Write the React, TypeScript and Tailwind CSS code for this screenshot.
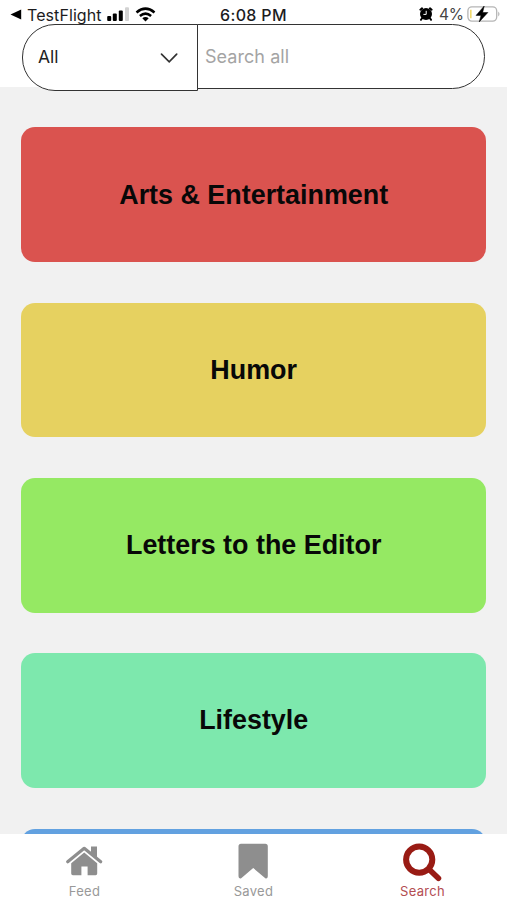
type Category = {
  name: string;
  color: string;
};

const categories: Category[] = [
  { name: 'Arts & Entertainment', color: 'bg-[#da534f]' },
  { name: 'Humor', color: 'bg-[#e6d160]' },
  { name: 'Letters to the Editor', color: 'bg-[#95e963]' },
  { name: 'Lifestyle', color: 'bg-[#7de8ad]' },
  { name: '', color: 'bg-[#62a1e0]' },
];

const StatusBar = () => (
  <div className="flex h-6 items-start text-[#1c1c1e]">
    <div className="flex w-[220px] items-start pt-[5px] pl-[10px]">
      <svg className="mt-[4px] h-[11px] w-[12px]" viewBox="0 0 12 11">
        <path d="M0.5 5.5 11.2 0.6V10.4Z" fill="#000" />
      </svg>
      <span className="ml-[5px] w-[75px] text-[16px] leading-5 tracking-[0.08px] whitespace-nowrap">TestFlight</span>
      <svg className="mt-[2px] ml-[5px] h-[14px] w-[23px]" viewBox="0 0 23 14">
        <rect x="0.2" y="9" width="4" height="5" rx="1" fill="#000" />
        <rect x="5.8" y="6.5" width="4" height="7.5" rx="1" fill="#000" />
        <rect x="11.8" y="3.5" width="4" height="10.5" rx="1" fill="#000" />
        <rect x="18" y="0.2" width="4" height="13.8" rx="1" fill="#d2d2d2" />
      </svg>
      <svg className="mt-[2px] ml-[5px] h-[15px] w-[21px]" viewBox="0 0 21 15" fill="none" stroke="#000" strokeWidth="2.6">
        <path d="M1.5 5.4Q10.5 -2 19.5 5.4" />
        <path d="M4.9 9Q10.5 4.4 16.1 9" />
        <path d="M7.3 11.3Q10.5 8.8 13.7 11.3L10.5 14.5Z" fill="#000" stroke="none" />
      </svg>
    </div>
    <span className="w-[100px] pt-[5px] text-[16px] leading-5 font-medium tracking-[0.35px] whitespace-nowrap">6:08 PM</span>
    <div className="flex flex-1 items-start pt-[5px] pl-[99px]">
      <svg className="mt-[2px] h-[14px] w-[14px]" viewBox="0 0 14 14">
        <path d="M3.2 11 2 12.8M10.8 11 12 12.8M1.4 2.7 3 1.4M12.6 2.7 11 1.4" stroke="#000" strokeWidth="2" strokeLinecap="round" />
        <circle cx="7" cy="7" r="6" fill="#000" />
        <path d="M7.2 3.8V7.4H4.4" fill="none" stroke="#fff" strokeWidth="1" />
      </svg>
      <span className="ml-[6px] w-[25px] text-[15.5px] leading-5 tracking-[-0.2px] whitespace-nowrap text-[#444]">4%</span>
      <svg className="ml-[3px] h-[18px] w-[34px]" viewBox="0 0 34 18">
        <rect x="0.9" y="1.9" width="28.8" height="14.2" rx="4" fill="none" stroke="#b5b5b5" strokeWidth="1.3" />
        <path d="M31.3 6.5Q33.6 9 31.3 11.5Z" fill="#a5a5a5" />
        <path d="M3.2 4.7H4.5V13.3H3.2Z" fill="#eed14a" />
        <path d="M17.2 1 9 10.4H14L12.2 17 20.9 7.5H15.7Z" fill="#000" stroke="#000" strokeWidth="0.5" strokeLinejoin="round" />
      </svg>
    </div>
  </div>
);

const SearchBar = () => (
  <div className="flex h-[67px] items-start pr-[22px] pl-[22px]">
    <button className="flex h-[67px] w-[176px] items-center justify-between rounded-l-[33px] border-[1.5px] border-[#333] bg-white pr-[18px] pl-[15px] text-[17.5px] text-[#222]">
      <span>All</span>
      <svg className="h-[12px] w-[20px]" viewBox="0 0 20 12" fill="none" stroke="#333" strokeWidth="1.7" strokeLinecap="round">
        <path d="M2.5 2.2 10.2 9.8 17.7 2.2" />
      </svg>
    </button>
    <div className="-ml-px flex h-[64.5px] flex-1 items-center rounded-r-[33px] border-[1.5px] border-[#333] bg-white pt-px pl-[7px]">
      <input
        type="text"
        placeholder="Search all"
        className="w-[200px] bg-transparent text-[18px] tracking-[0.05px] outline-none placeholder:text-[#a4a4a4]"
      />
    </div>
  </div>
);

const TabBar = () => (
  <nav className="grid h-[66px] shrink-0 grid-cols-3 bg-white text-[13px] leading-4 tracking-[0.3px] text-[#999]">
    <div className="flex flex-col items-center pt-[8px]">
      <svg className="mr-[2px] h-[38px] w-[40px]" viewBox="0 0 40 38" fill="#8e8e8e">
        <path d="M27 4.5H33V16L27 11Z" />
        <path d="M3.7 19.7 20.2 6.3 36.7 19.7" fill="none" stroke="#8e8e8e" strokeWidth="3.2" strokeLinecap="round" strokeLinejoin="round" />
        <path d="M20.2 10.6 33.2 21.3V31.6Q33.2 33.3 31.6 33.3H23.6V24.4H17.4V33.3H8.9Q7.2 33.3 7.2 31.6V21.3Z" />
      </svg>
      <span className="mt-[3px]">Feed</span>
    </div>
    <div className="flex flex-col items-center pt-[8px]">
      <svg className="mr-[2px] h-[38px] w-[40px]" viewBox="0 0 40 38" fill="#8e8e8e">
        <path d="M8 1.7H32.3Q34.8 1.7 34.8 4.2V34.3Q34.8 37 32.3 36.2L20.2 26 8.2 36.2Q5.5 37 5.5 34.3V4.2Q5.5 1.7 8 1.7Z" />
      </svg>
      <span className="mt-[3px]">Saved</span>
    </div>
    <div className="flex flex-col items-center pt-[8px] text-[#b34d52]">
      <svg className="mr-[2px] h-[40px] w-[40px]" viewBox="0 0 40 40" fill="none" stroke="#991b14">
        <circle cx="17.2" cy="17.6" r="13.1" strokeWidth="6" />
        <path d="M27.5 27.7 36.4 36.2" strokeWidth="5.7" strokeLinecap="round" />
      </svg>
      <span className="mt-px">Search</span>
    </div>
  </nav>
);

const App = () => {
  return (
    <div className="flex h-[900px] w-[507px] flex-col overflow-hidden bg-[#f1f1f1] font-['Inter',sans-serif]">
      <header className="h-[87px] shrink-0 bg-white">
        <StatusBar />
        <SearchBar />
      </header>

      <main className="flex min-h-0 flex-1 flex-col gap-[40.7px] overflow-hidden px-[21px] pt-[40.4px]">
        {categories.map((category) => (
          <button
            key={category.color}
            className={`h-[134.6px] w-[465.4px] shrink-0 rounded-[14px] font-['Liberation_Sans',sans-serif] text-[26.9px] font-bold text-[#080808] ${category.color}`}
          >
            {category.name}
          </button>
        ))}
      </main>

      <TabBar />
    </div>
  );
};

export default App;
